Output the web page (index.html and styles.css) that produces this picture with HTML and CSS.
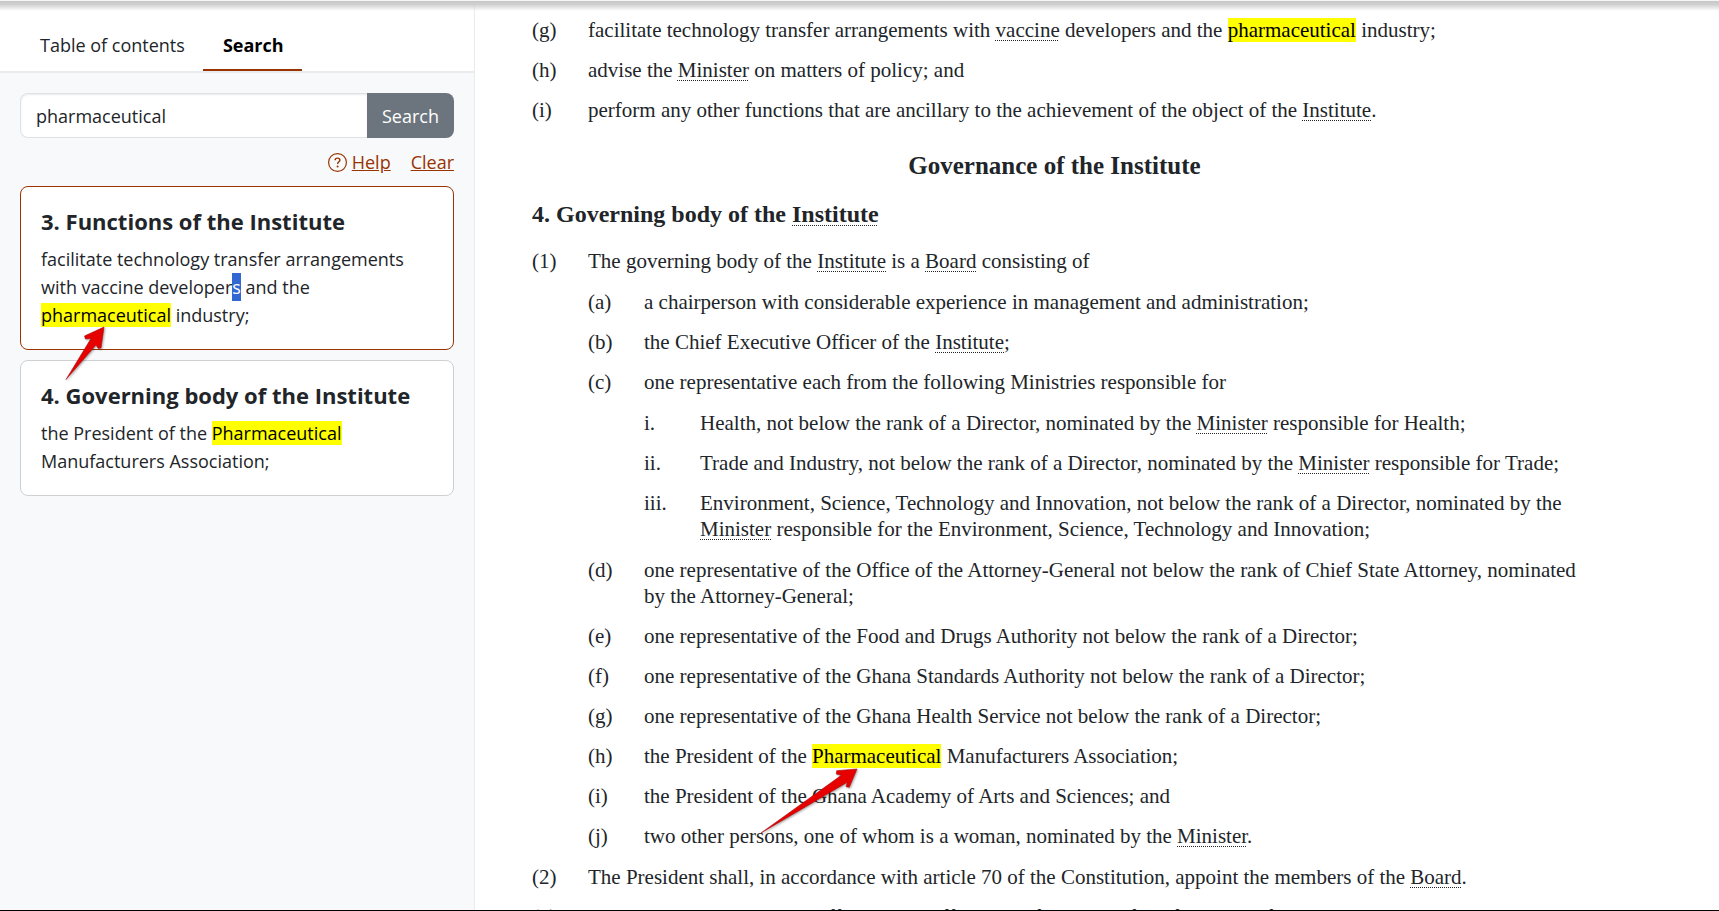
FILE: index.html
```html
<!DOCTYPE html>
<html lang="en">
<head>
<meta charset="utf-8">
<title>Governance of the Institute</title>
<link rel="stylesheet" href="styles.css">
</head>
<body>
<div class="page">
  <aside class="sidebar">
    <nav class="tabs">
      <button class="tab" type="button">Table of contents</button>
      <button class="tab tab-active" type="button">Search</button>
    </nav>
    <div class="panel">
      <form class="search">
        <input class="search-input" type="text" value="pharmaceutical" aria-label="Search this document">
        <button class="search-button" type="button">Search</button>
      </form>
      <div class="links">
        <span class="help">
          <svg class="help-icon" viewBox="0 0 16 16" aria-hidden="true"><circle cx="8" cy="8" r="7.5" fill="none" stroke="currentColor"/><path d="M6 6.1C6 4.9 6.9 4.3 8 4.3s2 .6 2 1.7C10 7.400 8.100 7.400 8.100 9.300" fill="none" stroke="currentColor" stroke-width="1.200"/><circle cx="8.100" cy="11.300" r=".85" fill="currentColor"/></svg>
          <a href="#help">Help</a>
        </span>
        <a href="#clear">Clear</a>
      </div>
      <div class="results">
        <article class="card card-active">
          <h2 class="card-title">3. Functions of the Institute</h2>
          <p class="card-text">facilitate technology transfer arrangements with vaccine developer<span class="selected">s</span> and the <mark class="anchor">pharmaceutical<svg class="arrow arrow-short" viewBox="0 0 42 56" aria-hidden="true"><path d="M40 2 20.500 11 21.500 14 27 13.500 2 54.500 32 20 34.300 23.500 37 23Z" fill="#e60000" stroke="#a80f0f" stroke-width=".6"/></svg></mark> industry;</p>
        </article>
        <article class="card">
          <h2 class="card-title">4. Governing body of the Institute</h2>
          <p class="card-text">the President of the <mark>Pharmaceutical</mark> Manufacturers Association;</p>
        </article>
      </div>
    </div>
  </aside>
  <main class="document">
    <div class="provisions">
      <div class="item"><span>(g)</span><p>facilitate technology transfer arrangements with <span class="term">vaccine</span> developers and the <mark>pharmaceutical</mark> industry;</p></div>
      <div class="item"><span>(h)</span><p>advise the <span class="term">Minister</span> on matters of policy; and</p></div>
      <div class="item"><span>(i)</span><p>perform any other functions that are ancillary to the achievement of the object of the <span class="term">Institute</span>.</p></div>
    </div>
    <h2 class="part-title">Governance of the Institute</h2>
    <h3 class="section-title">4. Governing body of the <span class="term">Institute</span></h3>
    <div class="provisions">
      <div class="item"><span>(1)</span><div>
        <p>The governing body of the <span class="term">Institute</span> is a <span class="term">Board</span> consisting of</p>
        <div class="provisions nested">
          <div class="item"><span>(a)</span><p>a chairperson with considerable experience in management and administration;</p></div>
          <div class="item"><span>(b)</span><p>the Chief Executive Officer of the <span class="term">Institute</span>;</p></div>
          <div class="item"><span>(c)</span><div>
            <p>one representative each from the following Ministries responsible for</p>
            <div class="provisions nested">
              <div class="item"><span>i.</span><p>Health, not below the rank of a Director, nominated by the <span class="term">Minister</span> responsible for Health;</p></div>
              <div class="item"><span>ii.</span><p>Trade and Industry, not below the rank of a Director, nominated by the <span class="term">Minister</span> responsible for Trade;</p></div>
              <div class="item"><span>iii.</span><p>Environment, Science, Technology and Innovation, not below the rank of a Director, nominated by the <span class="term">Minister</span> responsible for the Environment, Science, Technology and Innovation;</p></div>
            </div>
          </div></div>
          <div class="item"><span>(d)</span><p>one representative of the Office of the Attorney-General not below the rank of Chief State Attorney, nominated by the Attorney-General;</p></div>
          <div class="item"><span>(e)</span><p>one representative of the Food and Drugs Authority not below the rank of a Director;</p></div>
          <div class="item"><span>(f)</span><p>one representative of the Ghana Standards Authority not below the rank of a Director;</p></div>
          <div class="item"><span>(g)</span><p>one representative of the Ghana Health Service not below the rank of a Director;</p></div>
          <div class="item"><span>(h)</span><p>the President of the <mark class="anchor">Pharmaceutical<svg class="arrow arrow-long" viewBox="0 0 100 68" aria-hidden="true"><path d="M98 2 77.700 3.700 77.300 7 82.300 8.300 2 66 88.300 15.300 87 19.700 90.300 20.300Z" fill="#e60000" stroke="#a80f0f" stroke-width=".6"/></svg></mark> Manufacturers Association;</p></div>
          <div class="item"><span>(i)</span><p>the President of the Ghana Academy of Arts and Sciences; and</p></div>
          <div class="item"><span>(j)</span><p>two other persons, one of whom is a woman, nominated by the <span class="term">Minister</span>.</p></div>
        </div>
      </div></div>
      <div class="item"><span>(2)</span><p>The President shall, in accordance with article 70 of the Constitution, appoint the members of the <span class="term">Board</span>.</p></div>
      <div class="item"><span>(3)</span><p>The <span class="term">Board</span> shall ensure the effective and efficient performance of the functions of the <span class="term">Institute</span>.</p></div>
    </div>
  </main>
</div>
</body>
</html>
```
FILE: styles.css
```css
* { box-sizing: border-box; }

body {
  margin: 0;
  color: #212529;
  background: #fff;
  font: 18px/28px "Open Sans", "Noto Sans", sans-serif;
}

h2, h3, p { margin: 0; }
button, input { font: inherit; color: inherit; }
a { color: #993300; text-decoration: underline; }
mark { background: #ff0; color: #000; }

.page {
  display: flex;
  height: 100vh;
  overflow: hidden;
  border-top: 1px solid #f3f6f4;
  border-bottom: 1px solid #000;
  position: relative;
}

/* Shadow cast by the bar above the scrolled content */
.page::before {
  content: "";
  position: absolute;
  inset: 0 0 auto;
  height: 10px;
  background: linear-gradient(#c6c7c6, #cfd0cf 35%, rgba(255, 255, 255, 0));
}

.sidebar {
  flex: none;
  width: 475px;
  border-right: 1px solid #e9ecef;
  background: #f8f9fb;
}

.tabs {
  display: flex;
  padding: 20px 20px 0;
  background: #fff;
  border-bottom: 2px solid #e9ecef;
}

.tab {
  padding: 10px 18px 10px 20px;
  border: 0;
  border-bottom: 2px solid transparent;
  background: none;
}

.tab-active {
  border-bottom-color: #993300;
  color: #000;
  font-weight: 700;
}

.panel { padding: 20px; }
.search { display: flex; }

.search-input {
  flex: 1;
  min-width: 0;
  height: 45px;
  padding: 0 15px;
  border: 1px solid #dee2e6;
  border-right: 0;
  border-radius: 8px 0 0 8px;
  background: #fff;
  box-shadow: inset 0 1px 2px rgba(0, 0, 0, .08);
}

.search-button {
  padding: 0 15px;
  border: 0;
  border-radius: 0 8px 8px 0;
  background: #6c757d;
  color: #fff;
}

.links {
  display: flex;
  justify-content: flex-end;
  gap: 20px;
  padding: 10px 0;
}

.help { display: flex; align-items: center; gap: 5px; }
.help-icon { width: 19px; height: 19px; color: #993300; }
.results { display: grid; gap: 10px; }

.card {
  padding: 20px;
  border: 1px solid #ced0d3;
  border-radius: 8px;
  background: #fff;
}

.card-active { border-color: #993300; }
.card-title { margin-bottom: 10px; font-size: 22px; line-height: 28px; }
.selected { display: inline-block; background: #3367d1; color: #fff; }

.document {
  flex: 1;
  min-width: 0;
  padding: 16px 142px 0 57px;
  font: 21px/26px "Palatino Linotype", "Liberation Serif", serif;
}

.provisions { display: grid; gap: 14px; }
.nested { margin: 15px 0 1px; }
.item { display: grid; grid-template-columns: 56px 1fr; }
.term { text-decoration: underline dotted 1px; text-underline-offset: 3px; text-decoration-skip-ink: none; }
.part-title { margin: 29px 0 20px; font-size: 25px; line-height: 28px; text-align: center; }
.section-title { margin-bottom: 20px; font-size: 24px; line-height: 28px; }

.anchor { position: relative; }
.arrow { position: absolute; filter: drop-shadow(1px 1px 1px rgba(0, 0, 0, .35)); }
.arrow-short { left: 23px; top: 22px; width: 42px; height: 56px; }
.arrow-long { right: 82px; top: 23px; width: 100px; height: 68px; }
```
